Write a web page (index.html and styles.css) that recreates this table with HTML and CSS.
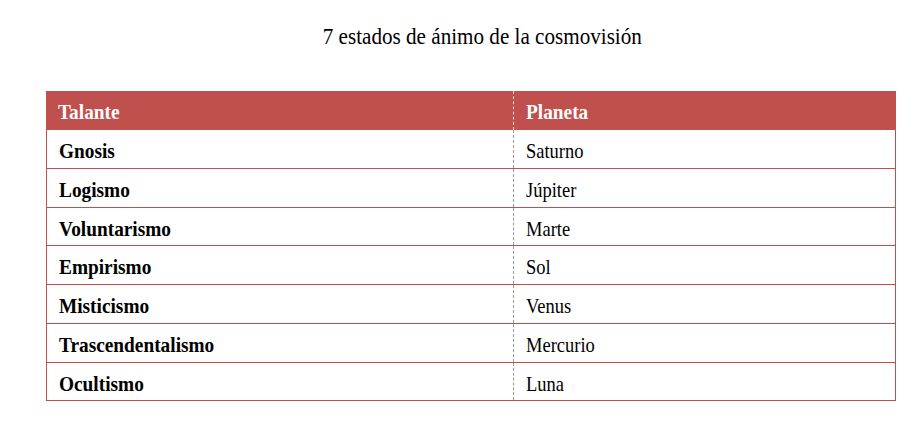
FILE: index.html
```html
<!DOCTYPE html>
<html lang="es">
<head>
<meta charset="utf-8">
<link rel="stylesheet" href="styles.css">
</head>
<body>
<div class="page">
  <h1 class="title"><span class="sq">7 estados de ánimo de la cosmovisión</span></h1>
  <div class="grid">
    <div class="row head"><div class="c1"><span class="sq">Talante</span></div><div class="c2"><span class="sq">Planeta</span></div></div>
    <div class="row"><div class="c1"><span class="sq">Gnosis</span></div><div class="c2"><span class="sq">Saturno</span></div></div>
    <div class="row"><div class="c1"><span class="sq">Logismo</span></div><div class="c2"><span class="sq">Júpiter</span></div></div>
    <div class="row"><div class="c1"><span class="sq">Voluntarismo</span></div><div class="c2"><span class="sq">Marte</span></div></div>
    <div class="row"><div class="c1"><span class="sq">Empirismo</span></div><div class="c2"><span class="sq">Sol</span></div></div>
    <div class="row"><div class="c1"><span class="sq">Misticismo</span></div><div class="c2"><span class="sq">Venus</span></div></div>
    <div class="row"><div class="c1"><span class="sq">Trascendentalismo</span></div><div class="c2"><span class="sq">Mercurio</span></div></div>
    <div class="row"><div class="c1"><span class="sq">Ocultismo</span></div><div class="c2"><span class="sq">Luna</span></div></div>
  </div>
</div>
</body>
</html>
```

FILE: styles.css
```css
html, body { margin: 0; padding: 0; background: #fff; }
body { font-family: "Liberation Serif", "Times New Roman", serif; color: #000; }
.page { padding: 23px 0 0 46px; width: 850px; }
.sq {
  display: inline-block;
  transform: scaleX(0.88);
  transform-origin: left center;
  white-space: nowrap;
}
.title {
  margin: 0;
  padding-left: 22px;
  font-weight: normal;
  font-size: 24px;
  line-height: normal;
  text-align: center;
  height: 68px;
}
.title .sq { transform-origin: center center; }
.grid {
  width: 850px;
  display: flex;
  flex-direction: column;
}
.row {
  display: flex;
  height: 38.75px;
  box-sizing: border-box;
  border-bottom: 1px solid #c0504d;
  border-left: 1px solid #c0504d;
  border-right: 1px solid #c0504d;
  font-size: 21px;
}
.row.head {
  height: 39px;
  background: #c0504d;
  color: #fff;
  font-weight: bold;
  border: none;
}
.c1, .c2 {
  box-sizing: border-box;
  padding: 9px 0 0 12px;
  line-height: normal;
}
.c1 { width: 467px; font-weight: bold; }
.row:not(.head) .c1 { width: 466px; }
.c1 .sq, .head .sq { transform: scaleX(0.92); }
.c2 { flex: 1; border-left: 1px dashed #9a9a9a; }
.head .c2 { border-left-color: rgba(255,255,255,0.75); }
```
